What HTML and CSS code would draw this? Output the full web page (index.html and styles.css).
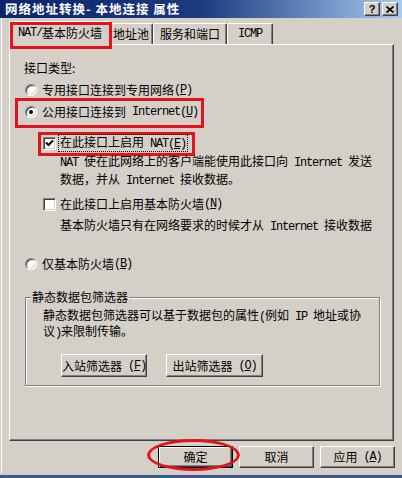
FILE: index.html
```html
<!DOCTYPE html>
<html lang="zh-CN">
<head>
  <meta charset="UTF-8">
  <title>网络地址转换- 本地连接 属性</title>
  <link rel="stylesheet" href="styles.css">
</head>
<body>
  <div class="window">
    <div class="titlebar">
      <span class="title">网络地址转换- 本地连接 属性</span>
      <span class="tbtn help">?</span>
      <span class="tbtn close">
        <svg width="8" height="7" viewBox="0 0 8 7"><path d="M0.5 0.5 L7.5 6.5 M7.5 0.5 L0.5 6.5" stroke="#000" stroke-width="1.7" fill="none"/></svg>
      </span>
    </div>

    <div class="client">
      <div class="tabs">
        <div class="tab active"><span class="en">NAT/</span>基本防火墙</div>
        <div class="tab t-pool">地址池</div>
        <div class="tab t-ports">服务和端口</div>
        <div class="tab t-icmp"><span class="en">ICMP</span></div>
      </div>

      <div class="panel">
        <div class="caption">接口类型:</div>

        <div class="opt radio-1"><span class="radio"></span>专用接口连接到专用网络<span class="en">(<u>P</u>)</span></div>

        <div class="mark mark-public">
          <div class="opt"><span class="radio on"></span>公用接口连接到<span class="en"> Internet(<u>U</u>)</span></div>
        </div>

        <div class="mark mark-nat">
          <div class="opt">
            <span class="check on">
              <svg width="9" height="9" viewBox="0 0 9 9"><path d="M1 3.5 L3.5 6 L8 1.5" stroke="#000" stroke-width="2" fill="none"/></svg>
            </span>
            <span class="focus">在此接口上启用<span class="en"> NAT(<u>E</u>)</span></span>
          </div>
        </div>
        <div class="desc desc-nat">
          <span class="en">NAT </span>使在此网络上的客户端能使用此接口向<span class="en"> Internet </span>发送<br>
          数据，并从<span class="en"> Internet </span>接收数据。
        </div>

        <div class="opt check-fw"><span class="check"></span>在此接口上启用基本防火墙<span class="en">(<u>N</u>)</span></div>
        <div class="desc desc-fw">基本防火墙只有在网络要求的时候才从<span class="en"> Internet </span>接收数据</div>

        <div class="opt radio-3"><span class="radio"></span>仅基本防火墙<span class="en">(<u>B</u>)</span></div>

        <div class="group">
          <div class="legend">静态数据包筛选器</div>
          <div class="group-text">
            静态数据包筛选器可以基于数据包的属性<span class="en">(</span>例如<span class="en"> IP </span>地址或协<br>
            议<span class="en">)</span>来限制传输。
          </div>
          <div class="group-buttons">
            <div class="btn btn-in">入站筛选器<span class="en"> (<u>F</u>)</span></div>
            <div class="btn btn-out">出站筛选器<span class="en"> (<u>O</u>)</span></div>
          </div>
        </div>
      </div>

      <div class="footer">
        <div class="btn btn-ok">确定</div>
        <div class="btn">取消</div>
        <div class="btn">应用<span class="en"> (<u>A</u>)</span></div>
      </div>
    </div>

    <div class="taskbar"></div>
  </div>
</body>
</html>
```

FILE: styles.css
```css
:root {
  --face: #d4d0c8;
  --light: #ffffff;
  --shadow: #808080;
  --dark: #404040;
  --mark: #e5121c;
}

body {
  margin: 0;
  font-family: "Noto Sans CJK SC", sans-serif;
  font-size: 12px;
  line-height: 12px;
  color: #000;
}

.window {
  width: 402px;
  height: 478px;
  background: var(--face);
  display: flex;
  flex-direction: column;
  overflow: hidden;
}

/* title bar */

.titlebar {
  height: 18px;
  box-sizing: border-box;
  padding: 2px 4px 2px 5px;
  display: flex;
  align-items: center;
  background: linear-gradient(to right, #0a246a 0%, #1c3a80 50%, #a6caf0 100%);
}

.title {
  flex: 1;
  color: #fff;
  font-weight: bold;
  font-size: 12.5px;
  letter-spacing: 1px;
  white-space: nowrap;
}

.tbtn {
  width: 16px;
  height: 14px;
  box-sizing: border-box;
  display: flex;
  align-items: center;
  justify-content: center;
  background: var(--face);
  border: 1px solid;
  border-color: var(--light) var(--dark) var(--dark) var(--light);
  box-shadow: inset -1px -1px var(--shadow);
}

.help {
  margin-right: 2px;
  font-family: "Liberation Sans", sans-serif;
  font-weight: bold;
  font-size: 11px;
}

/* client area */

.client {
  flex: 1;
  margin: 0 0 2px 1px;
  border-left: 1px solid var(--light);
  padding: 3px 7px 0 7px;
}

.en {
  font-family: "Liberation Mono", monospace;
  font-size: 12px;
  letter-spacing: -1.2px;
  white-space: pre;
}

u {
  text-underline-offset: 1px;
}

/* tabs */

.tabs {
  height: 23px;
  padding-left: 2px;
  display: flex;
  align-items: flex-end;
}

.tab {
  height: 21px;
  box-sizing: border-box;
  display: flex;
  align-items: center;
  justify-content: center;
  border-top: 1px solid var(--light);
  border-left: 1px solid var(--light);
  border-right: 1px solid var(--dark);
  border-radius: 2px 2px 0 0;
  box-shadow: inset -1px 0 var(--shadow);
  background: var(--face);
  white-space: nowrap;
}

.tab.active {
  position: relative;
  z-index: 1;
  width: 102px;
  height: 24px;
  margin: 0 -2px -1px -2px;
  padding-bottom: 2px;
}

.tab.active::after {
  content: "";
  position: absolute;
  left: 0;
  top: 0;
  right: -2px;
  bottom: -4px;
  border: 3px solid var(--mark);
}

.t-pool { width: 44px; }
.t-ports { width: 74px; }
.t-icmp { width: 46px; }

/* panel */

.panel {
  height: 397px;
  margin-right: 1px;
  box-sizing: border-box;
  border: 1px solid;
  border-color: var(--light) var(--dark) var(--dark) var(--light);
  box-shadow: inset -1px -1px var(--shadow);
}

.caption {
  margin-top: 17px;
  padding-left: 14px;
}

.opt {
  height: 14px;
  display: flex;
  align-items: center;
  white-space: nowrap;
}

.radio {
  width: 12px;
  height: 12px;
  box-sizing: border-box;
  margin-right: 5px;
  border-radius: 50%;
  border: 1px solid;
  border-color: var(--shadow) var(--light) var(--light) var(--shadow);
  box-shadow: inset 1px 1px var(--dark), inset -1px -1px var(--face);
  background: #fff;
  display: flex;
  align-items: center;
  justify-content: center;
}

.radio.on::after {
  content: "";
  width: 4px;
  height: 4px;
  border-radius: 50%;
  background: #000;
}

.check {
  width: 13px;
  height: 13px;
  box-sizing: border-box;
  margin-right: 4px;
  border: 1px solid;
  border-color: var(--shadow) var(--light) var(--light) var(--shadow);
  box-shadow: inset 1px 1px var(--dark), inset -1px -1px var(--face);
  background: #fff;
  display: flex;
  align-items: center;
  justify-content: center;
}

.focus {
  outline: 1px dotted #000;
  outline-offset: 1px;
}

.radio-1 {
  margin: 9px 0 0 15px;
}

.mark {
  box-sizing: border-box;
  border: 3px solid var(--mark);
}

.mark-public {
  width: 189px;
  height: 30px;
  margin: 1px 0 0 5px;
}

.mark-public .opt {
  margin-top: 4px;
  padding-left: 7px;
}

.mark-nat {
  width: 157px;
  height: 24px;
  margin: 4px 0 0 28px;
}

.mark-nat .opt {
  padding-left: 2px;
  margin-top: 1px;
}

.desc {
  padding-left: 50px;
  line-height: 13px;
  white-space: nowrap;
}

.desc-nat {
  margin-top: -3px;
  line-height: 15px;
}

.check-fw {
  margin: 8px 0 0 33px;
}

.desc-fw {
  margin-top: 7px;
}

.radio-3 {
  margin: 23px 0 0 15px;
}

/* static packet filter group */

.group {
  width: 355px;
  height: 89px;
  box-sizing: border-box;
  margin: 26px 0 0 15px;
  border: 1px solid var(--shadow);
  box-shadow: inset 1px 1px var(--light), 1px 1px var(--light);
}

.legend {
  width: fit-content;
  margin: -7px 0 0 5px;
  padding: 0 1px;
  background: var(--face);
}

.group-text {
  margin-top: 5px;
  padding-left: 17px;
  line-height: 13px;
  white-space: nowrap;
}

.group-buttons {
  margin: 14px 0 0 35px;
  display: flex;
  gap: 19px;
}

/* buttons */

.btn {
  width: 75px;
  height: 22px;
  box-sizing: border-box;
  display: flex;
  align-items: center;
  justify-content: center;
  background: var(--face);
  border: 1px solid;
  border-color: var(--light) var(--dark) var(--dark) var(--light);
  box-shadow: inset -1px -1px var(--shadow);
  white-space: nowrap;
}

.btn-in {
  width: 86px;
  height: 23px;
}

.btn-out {
  width: 97px;
  height: 23px;
}

.footer {
  margin-top: 5px;
  display: flex;
  justify-content: flex-end;
  gap: 6px;
}

.btn-ok {
  position: relative;
  border-color: #000;
  box-shadow: inset 1px 1px var(--light), inset -1px -1px var(--dark), inset -2px -2px var(--shadow);
}

.btn-ok::after {
  content: "";
  position: absolute;
  left: -12px;
  top: -8px;
  width: 93px;
  height: 32px;
  box-sizing: border-box;
  border: 3px solid var(--mark);
  border-radius: 50%;
}

.taskbar {
  height: 3px;
  background: #3d5a84;
}
```
